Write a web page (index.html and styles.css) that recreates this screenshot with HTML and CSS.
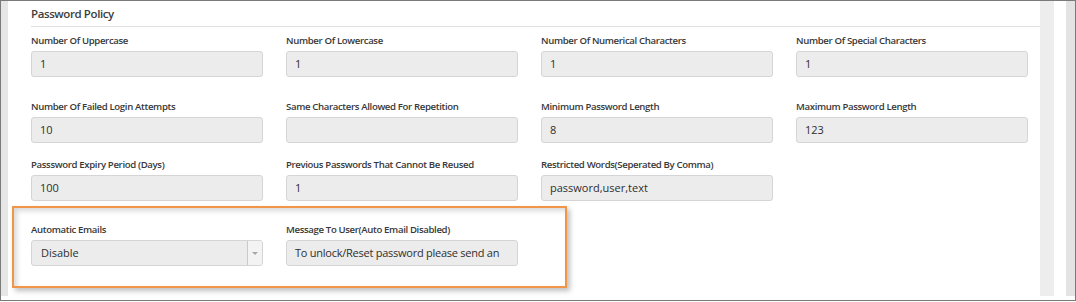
FILE: index.html
```html
<!DOCTYPE html>
<html lang="en">
<head>
  <meta charset="UTF-8" />
  <title>Password Policy</title>
  <link rel="stylesheet" href="styles.css">
</head>
<body>
  <div class="frame">
    <div class="strip-left"></div>

    <div class="panel">
      <div class="panel-title">Password Policy</div>

      <div class="row row-first">
        <div class="field">
          <label>Number Of Uppercase</label>
          <div class="input">1</div>
        </div>
        <div class="field">
          <label>Number Of Lowercase</label>
          <div class="input">1</div>
        </div>
        <div class="field">
          <label>Number Of Numerical Characters</label>
          <div class="input">1</div>
        </div>
        <div class="field">
          <label>Number Of Special Characters</label>
          <div class="input">1</div>
        </div>
      </div>

      <div class="row">
        <div class="field">
          <label>Number Of Failed Login Attempts</label>
          <div class="input">10</div>
        </div>
        <div class="field">
          <label>Same Characters Allowed For Repetition</label>
          <div class="input"></div>
        </div>
        <div class="field">
          <label>Minimum Password Length</label>
          <div class="input">8</div>
        </div>
        <div class="field">
          <label>Maximum Password Length</label>
          <div class="input">123</div>
        </div>
      </div>

      <div class="row row-third">
        <div class="field">
          <label>Passsword Expiry Period (Days)</label>
          <div class="input">100</div>
        </div>
        <div class="field">
          <label>Previous Passwords That Cannot Be Reused</label>
          <div class="input">1</div>
        </div>
        <div class="field">
          <label>Restricted Words(Seperated By Comma)</label>
          <div class="input">password,user,text</div>
        </div>
      </div>

      <div class="row">
        <div class="field">
          <label>Automatic Emails</label>
          <div class="input select">
            <span>Disable</span>
            <span class="arrow"></span>
          </div>
        </div>
        <div class="field">
          <label>Message To User(Auto Email Disabled)</label>
          <div class="input input-msg">To unlock/Reset password please send an</div>
        </div>
      </div>

      <!-- Marca naranja sobre los correos automáticos -->
      <div class="highlight"></div>
    </div>

    <div class="gutter"></div>
    <div class="spacer"></div>
    <div class="scroll"></div>
  </div>
</body>
</html>
```

FILE: styles.css
```css
html, body {
  margin: 0;
  padding: 0;
  background: #fff;
  font-family: "Open Sans", "Liberation Sans", sans-serif;
}

.frame {
  display: flex;
  width: 1076px;
  height: 301px;
  box-sizing: border-box;
  border: 1px solid #7a7a7a;
  padding-bottom: 4px;
  overflow: hidden;
}

.strip-left {
  width: 7px;
  background: #e6e6e6;
}

.panel {
  position: relative;
  width: 1032px;
  padding-left: 23px;
  box-sizing: border-box;
}

.gutter {
  width: 14px;
  background: #ededed;
}

.spacer {
  width: 12px;
}

.scroll {
  width: 9px;
  background: #e3e3e3;
}

.panel-title {
  height: 25px;
  line-height: 25px;
  font-size: 11.5px;
  font-weight: 600;
  letter-spacing: -0.4px;
  color: #3d3d3d;
  border-bottom: 1px solid #e2e2e2;
  margin-bottom: 7px;
}

/* Filas del formulario */
.row {
  display: grid;
  grid-template-columns: repeat(4, 232px);
  column-gap: 23px;
  margin-bottom: 15px;
}

.row-first {
  margin-bottom: 23px;
}

.row-third {
  margin-bottom: 22px;
}

.field label {
  display: block;
  font-size: 9.6px;
  font-weight: 600;
  letter-spacing: -0.35px;
  line-height: 14px;
  color: #383838;
  margin-bottom: 3px;
  white-space: nowrap;
}

.input {
  height: 26px;
  box-sizing: border-box;
  background: #ececec;
  border: 1px solid #d5d5d5;
  border-radius: 3px;
  padding-left: 8px;
  font-size: 11px;
  line-height: 24px;
  color: #2f2f2f;
  white-space: nowrap;
  overflow: hidden;
}

.input-msg {
  letter-spacing: -0.25px;
}

.select {
  display: flex;
  justify-content: space-between;
  padding-left: 9px;
}

.select .arrow {
  position: relative;
  width: 14px;
  background: #f3f3f3;
  border-left: 1px solid #c9c9c9;
}

.select .arrow::after {
  content: "";
  position: absolute;
  left: 4px;
  top: 11px;
  border-left: 3px solid transparent;
  border-right: 3px solid transparent;
  border-top: 3px solid #a8a8a8;
}

.highlight {
  position: absolute;
  left: 4px;
  top: 205px;
  width: 551px;
  height: 78px;
  border: 2px solid #f19548;
  box-shadow: 3px 3px 5px rgba(0,0,0,0.25), inset 3px 3px 5px rgba(0,0,0,0.15);
  pointer-events: none;
}
```
